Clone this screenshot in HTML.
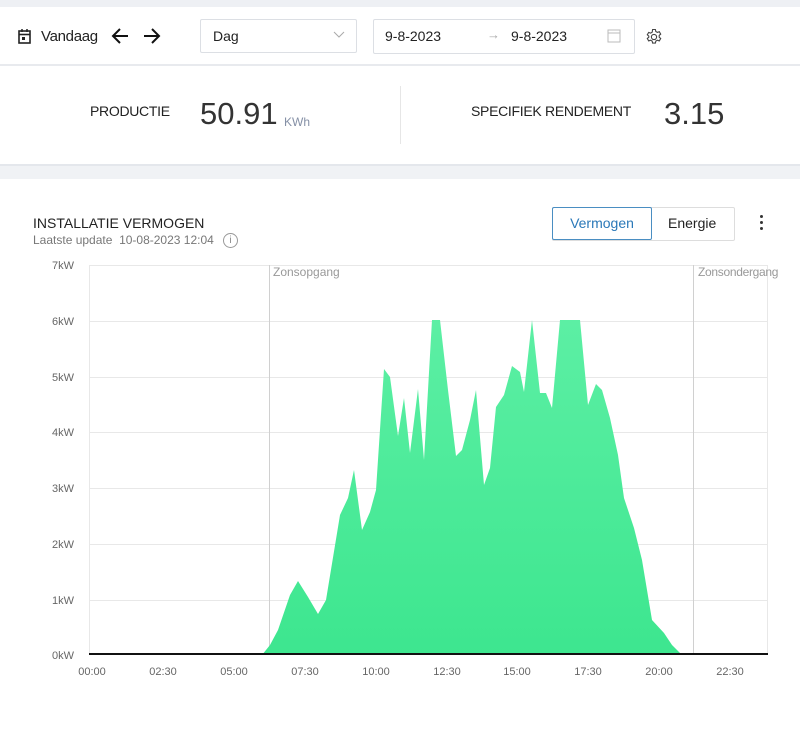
<!DOCTYPE html>
<html><head><style>
body{margin:0;width:800px;height:734px;background:#fff;font-family:"Liberation Sans",sans-serif;color:#222;position:relative;overflow:hidden}
.abs{position:absolute}
.box{position:absolute;border:1px solid #dcdfe4;border-radius:2px;background:#fff}
</style></head><body>
<div class="abs" style="left:0;top:0;width:800px;height:7px;background:#eef0f4"></div>
<div class="abs" style="left:0;top:64px;width:800px;height:2px;background:#e8eaee"></div>
<div class="abs" style="left:0;top:164px;width:800px;height:13px;background:#f0f2f5;border-top:2px solid #e4e7ec"></div>

<svg class="abs" style="left:17px;top:28px" width="16" height="17" viewBox="0 0 16 17"><rect x="2" y="3" width="11" height="12" fill="none" stroke="#222" stroke-width="1.6"/><line x1="2" y1="6.5" x2="13" y2="6.5" stroke="#222" stroke-width="1.6"/><line x1="5" y1="1" x2="5" y2="4" stroke="#222" stroke-width="1.5"/><line x1="10" y1="1" x2="10" y2="4" stroke="#222" stroke-width="1.5"/><rect x="5" y="9" width="3" height="3" fill="#222"/></svg>
<div class="abs" style="left:41px;top:28px;font-size:15px;letter-spacing:-0.3px">Vandaag</div>
<svg class="abs" style="left:110px;top:26px" width="52" height="20"><path d="M18 10H3M10 3L3 10L10 17" fill="none" stroke="#111" stroke-width="2"/><path d="M34 10H49M42 3L49 10L42 17" fill="none" stroke="#111" stroke-width="2"/></svg>

<div class="box" style="left:200px;top:19px;width:155px;height:32px"></div>
<div class="abs" style="left:213px;top:28px;font-size:14px">Dag</div>
<svg class="abs" style="left:333px;top:31px" width="12" height="8"><path d="M1 1L6 6L11 1" fill="none" stroke="#aaa" stroke-width="1"/></svg>

<div class="box" style="left:373px;top:19px;width:260px;height:33px"></div>
<div class="abs" style="left:385px;top:28px;font-size:14px">9-8-2023</div>
<div class="abs" style="left:487px;top:27px;font-size:13px;color:#aaa">→</div>
<div class="abs" style="left:511px;top:28px;font-size:14px">9-8-2023</div>
<svg class="abs" style="left:607px;top:28px" width="14" height="15"><rect x="1" y="2" width="12" height="12" fill="none" stroke="#bbb"/><line x1="1" y1="5" x2="13" y2="5" stroke="#bbb"/></svg>
<svg class="abs" style="left:645px;top:28px" width="18" height="18" viewBox="0 0 18 18"><g fill="none" stroke="#444" stroke-width="1.1"><circle cx="9" cy="9" r="2.6"/><path d="M7.6 1.5h2.8l.4 2 1.6.9 1.9-.7 1.4 2.4-1.5 1.3v1.8l1.5 1.3-1.4 2.4-1.9-.7-1.6.9-.4 2H7.6l-.4-2-1.6-.9-1.9.7-1.4-2.4 1.5-1.3V8.1L2.3 6.8l1.4-2.4 1.9.7 1.6-.9z"/></g></svg>

<div class="abs" style="left:90px;top:103px;font-size:14px;letter-spacing:-0.3px">PRODUCTIE</div>
<div class="abs" style="left:200px;top:96px;font-size:31px;color:#333">50.91</div>
<div class="abs" style="left:284px;top:115px;font-size:12px;color:#8590a6">KWh</div>
<div class="abs" style="left:400px;top:86px;width:1px;height:58px;background:#e6e6e6"></div>
<div class="abs" style="left:471px;top:103px;font-size:14px;letter-spacing:-0.3px">SPECIFIEK RENDEMENT</div>
<div class="abs" style="left:664px;top:96px;font-size:31px;color:#333">3.15</div>

<div class="abs" style="left:33px;top:215px;font-size:14px">INSTALLATIE VERMOGEN</div>
<div class="abs" style="left:33px;top:233px;font-size:12px;color:#777">Laatste update&nbsp; 10-08-2023 12:04</div>
<div class="abs" style="left:223px;top:233px;width:13px;height:13px;border:1px solid #999;border-radius:50%;font-size:10px;color:#888;text-align:center;line-height:13px">i</div>
<div class="box" style="left:552px;top:207px;width:181px;height:32px;border-color:#ddd"></div>
<div class="abs" style="left:552px;top:207px;width:98px;height:31px;border:1px solid #4a8ec2;border-radius:2px;color:#2a78b8;font-size:14px;text-align:center;line-height:31px">Vermogen</div>
<div class="abs" style="left:668px;top:215px;font-size:14px">Energie</div>
<div class="abs" style="left:760px;top:215px;width:3px"><div style="width:3px;height:3px;background:#333;border-radius:50%;margin-bottom:3px"></div><div style="width:3px;height:3px;background:#333;border-radius:50%;margin-bottom:3px"></div><div style="width:3px;height:3px;background:#333;border-radius:50%"></div></div>

<svg class="abs" style="left:0;top:255px" width="800" height="430" viewBox="0 255 800 430" font-family="Liberation Sans" font-size="11" fill="#666">
<defs><linearGradient id="g" x1="0" y1="0" x2="0" y2="1"><stop offset="0" stop-color="#5cefa4"/><stop offset="1" stop-color="#3de68f"/></linearGradient></defs>
<g stroke="#e8e8e8" stroke-width="1">
<line x1="89" y1="265.5" x2="768" y2="265.5"/><line x1="89" y1="321.5" x2="768" y2="321.5"/><line x1="89" y1="377.5" x2="768" y2="377.5"/><line x1="89" y1="432.5" x2="768" y2="432.5"/><line x1="89" y1="488.5" x2="768" y2="488.5"/><line x1="89" y1="544.5" x2="768" y2="544.5"/><line x1="89" y1="600.5" x2="768" y2="600.5"/>
<line x1="89.5" y1="265" x2="89.5" y2="655"/><line x1="767.5" y1="265" x2="767.5" y2="655"/>
</g>
<g stroke="#d0d0d0"><line x1="269.5" y1="265" x2="269.5" y2="655"/><line x1="693.5" y1="265" x2="693.5" y2="655"/></g>
<text x="273" y="276" fill="#999" font-size="12">Zonsopgang</text>
<text x="698" y="276" fill="#999" font-size="12" letter-spacing="-0.3">Zonsondergang</text>
<polygon fill="url(#g)" points="262,655 270,645 278,630 290,595 298,581 308,597 318,614 326,600 340,515 348,498 354,470 362,530 370,512 376,490 384,369 390,377 398,436 404,398 410,453 418,389 424,460 432,320 440,320 448,390 456,456 462,450 470,420 476,390 484,485 490,468 496,407 504,395 512,366 520,372 524,392 532,320 540,393 546,393 552,408 560,320 580,320 588,405 596,384 602,390 610,418 618,455 624,498 634,528 642,560 652,620 664,633 672,645 682,655"/>
<line x1="89" y1="654" x2="768" y2="654" stroke="#111" stroke-width="2"/>
<g text-anchor="end"><text x="74" y="269">7kW</text><text x="74" y="325">6kW</text><text x="74" y="381">5kW</text><text x="74" y="436">4kW</text><text x="74" y="492">3kW</text><text x="74" y="548">2kW</text><text x="74" y="604">1kW</text><text x="74" y="659">0kW</text></g>
<g text-anchor="middle"><text x="92" y="675">00:00</text><text x="163" y="675">02:30</text><text x="234" y="675">05:00</text><text x="305" y="675">07:30</text><text x="376" y="675">10:00</text><text x="447" y="675">12:30</text><text x="517" y="675">15:00</text><text x="588" y="675">17:30</text><text x="659" y="675">20:00</text><text x="730" y="675">22:30</text></g>
</svg>
</body></html>
